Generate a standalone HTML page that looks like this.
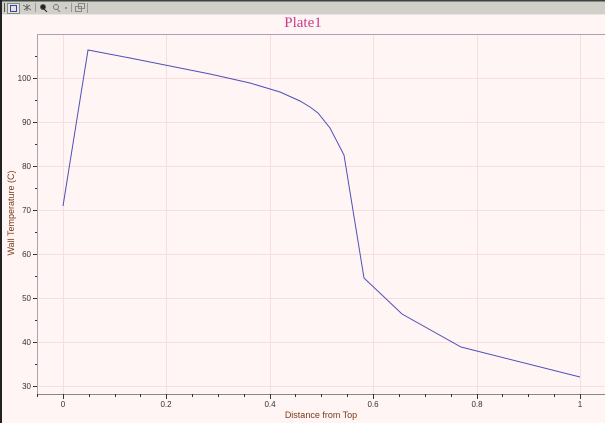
<!DOCTYPE html>
<html><head><style>
html,body{margin:0;padding:0;width:605px;height:423px;overflow:hidden;background:#fff5f5;}
</style></head><body>
<svg width="605" height="423" xmlns="http://www.w3.org/2000/svg" style="display:block">
<rect x="0" y="0" width="605" height="423" fill="#fff5f5"/>
<rect x="0" y="0" width="605" height="14" fill="#d1d0c8"/>
<rect x="0" y="0" width="605" height="1.5" fill="#3a4242"/>
<rect x="0" y="14" width="605" height="1" fill="#e8e6e0"/>
<rect x="0" y="0" width="2" height="423" fill="#222"/>
<g stroke="#555" fill="none" stroke-width="1">
<line x1="4.5" y1="3" x2="4.5" y2="12"/>
<rect x="7.5" y="3.5" width="12" height="10" fill="#e4e2dc" stroke="#888"/>
<rect x="10.5" y="5.5" width="6" height="6" stroke="#3344aa"/>
<path d="M23 5 L31 10 M24 10 L30 5 M27 4 L27 11" stroke="#666"/>
<line x1="35.5" y1="3" x2="35.5" y2="12" stroke="#999"/>
<circle cx="43" cy="7" r="2.5" fill="#222"/><line x1="44" y1="9" x2="47" y2="12" stroke="#222"/>
<circle cx="56" cy="7" r="2.5" stroke="#777"/><line x1="57" y1="9" x2="60" y2="12" stroke="#777"/>
<path d="M65 8 L67 8" stroke="#555"/>
<line x1="71.5" y1="3" x2="71.5" y2="12" stroke="#999"/>
<rect x="75.5" y="6.5" width="6" height="5" stroke="#888"/><rect x="78.5" y="3.5" width="6" height="5" stroke="#888"/>
<line x1="87.5" y1="3" x2="87.5" y2="13" stroke="#999"/>
</g>
<text x="303" y="27" font-family="Liberation Serif, serif" font-size="15" fill="#cc3a8a" text-anchor="middle">Plate1</text>
<g stroke="#f6dede" stroke-width="1">
<line x1="63.5" y1="35" x2="63.5" y2="394"/>
<line x1="166.5" y1="35" x2="166.5" y2="394"/>
<line x1="270.5" y1="35" x2="270.5" y2="394"/>
<line x1="373.5" y1="35" x2="373.5" y2="394"/>
<line x1="477.5" y1="35" x2="477.5" y2="394"/>
<line x1="580.5" y1="35" x2="580.5" y2="394"/>
<line x1="37" y1="386.5" x2="605" y2="386.5"/>
<line x1="37" y1="342.5" x2="605" y2="342.5"/>
<line x1="37" y1="298.5" x2="605" y2="298.5"/>
<line x1="37" y1="254.5" x2="605" y2="254.5"/>
<line x1="37" y1="210.5" x2="605" y2="210.5"/>
<line x1="37" y1="166.5" x2="605" y2="166.5"/>
<line x1="37" y1="122.5" x2="605" y2="122.5"/>
<line x1="37" y1="78.5" x2="605" y2="78.5"/>
</g>
<line x1="37" y1="34.5" x2="605" y2="34.5" stroke="#aaa2b2"/>
<line x1="37.5" y1="34" x2="37.5" y2="395" stroke="#aaa2b2"/>
<line x1="37" y1="394.5" x2="605" y2="394.5" stroke="#888"/>
<g stroke="#333" stroke-width="1">
<line x1="33" y1="386.5" x2="37" y2="386.5"/><line x1="35" y1="364.5" x2="37" y2="364.5"/>
<line x1="33" y1="342.5" x2="37" y2="342.5"/><line x1="35" y1="320.5" x2="37" y2="320.5"/>
<line x1="33" y1="298.5" x2="37" y2="298.5"/><line x1="35" y1="276.5" x2="37" y2="276.5"/>
<line x1="33" y1="254.5" x2="37" y2="254.5"/><line x1="35" y1="232.5" x2="37" y2="232.5"/>
<line x1="33" y1="210.5" x2="37" y2="210.5"/><line x1="35" y1="188.5" x2="37" y2="188.5"/>
<line x1="33" y1="166.5" x2="37" y2="166.5"/><line x1="35" y1="144.5" x2="37" y2="144.5"/>
<line x1="33" y1="122.5" x2="37" y2="122.5"/><line x1="35" y1="100.5" x2="37" y2="100.5"/>
<line x1="33" y1="78.5" x2="37" y2="78.5"/><line x1="35" y1="56.5" x2="37" y2="56.5"/>
</g>
<g stroke="#333" stroke-width="1">
<line x1="37.5" y1="394" x2="37.5" y2="397"/>
<line x1="63.5" y1="394" x2="63.5" y2="399"/><line x1="89.5" y1="394" x2="89.5" y2="397"/><line x1="115.5" y1="394" x2="115.5" y2="397"/><line x1="140.5" y1="394" x2="140.5" y2="397"/>
<line x1="166.5" y1="394" x2="166.5" y2="399"/><line x1="192.5" y1="394" x2="192.5" y2="397"/><line x1="218.5" y1="394" x2="218.5" y2="397"/><line x1="244.5" y1="394" x2="244.5" y2="397"/>
<line x1="270.5" y1="394" x2="270.5" y2="399"/><line x1="295.5" y1="394" x2="295.5" y2="397"/><line x1="321.5" y1="394" x2="321.5" y2="397"/><line x1="347.5" y1="394" x2="347.5" y2="397"/>
<line x1="373.5" y1="394" x2="373.5" y2="399"/><line x1="399.5" y1="394" x2="399.5" y2="397"/><line x1="425.5" y1="394" x2="425.5" y2="397"/><line x1="451.5" y1="394" x2="451.5" y2="397"/>
<line x1="477.5" y1="394" x2="477.5" y2="399"/><line x1="502.5" y1="394" x2="502.5" y2="397"/><line x1="528.5" y1="394" x2="528.5" y2="397"/><line x1="554.5" y1="394" x2="554.5" y2="397"/>
<line x1="580.5" y1="394" x2="580.5" y2="399"/>
</g>
<g font-family="Liberation Sans, sans-serif" font-size="8" fill="#333" text-anchor="end">
<text x="31" y="389">30</text><text x="31" y="345">40</text><text x="31" y="301">50</text><text x="31" y="257">60</text>
<text x="31" y="213">70</text><text x="31" y="169">80</text><text x="31" y="125">90</text><text x="31" y="81">100</text>
</g>
<g font-family="Liberation Sans, sans-serif" font-size="8" fill="#333" text-anchor="middle">
<text x="63" y="407">0</text><text x="166" y="407">0.2</text><text x="270" y="407">0.4</text><text x="373" y="407">0.6</text><text x="477" y="407">0.8</text><text x="580" y="407">1</text>
</g>
<text x="321" y="418" font-family="Liberation Sans, sans-serif" font-size="9" fill="#7a3a14" text-anchor="middle">Distance from Top</text>
<text transform="translate(14,213) rotate(-90)" font-family="Liberation Sans, sans-serif" font-size="9" fill="#7a3a14" text-anchor="middle">Wall Temperature (C)</text>
<polyline fill="none" stroke="#5050b8" stroke-width="1" points="63,206 88,50 130,58 165,65 210,74 250,83 280,92 300,101 310,107 318,113 330,128 344,155 364,278 402,314 461,347 580,377"/>
</svg>
</body></html>
